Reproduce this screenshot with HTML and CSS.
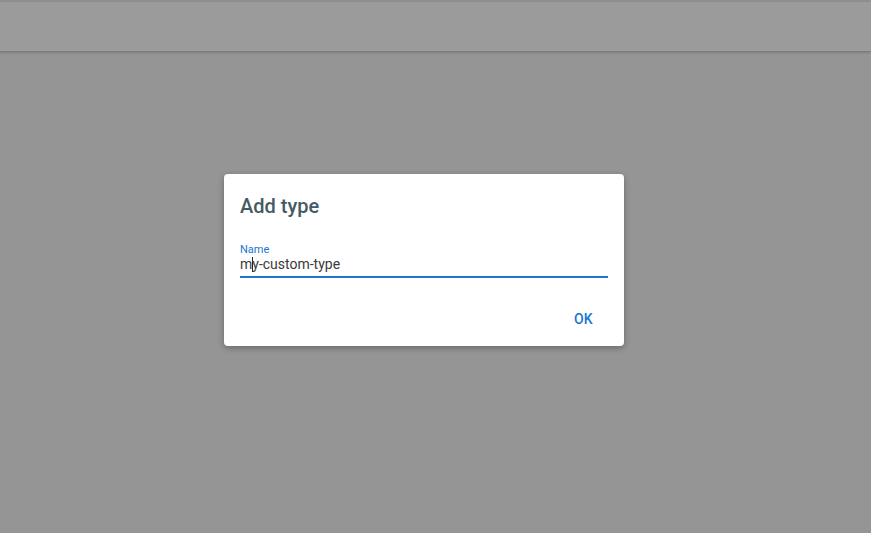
FILE: index.html
```html
<!DOCTYPE html>
<html>
<head>
<meta charset="utf-8">
<link rel="stylesheet" href="styles.css">
</head>
<body>
<div class="page">
  <header class="topbar"></header>
  <main class="backdrop">
    <div class="dialog">
      <h2 class="dialog-title">Add type</h2>
      <div class="field">
        <label class="field-label">Name</label>
        <div class="field-input">m<span class="caret"></span>y-custom-type</div>
      </div>
      <div class="actions">
        <button class="btn">OK</button>
      </div>
    </div>
  </main>
</div>
</body>
</html>
```
FILE: styles.css
```css
* { box-sizing: border-box; }
html, body { margin: 0; height: 100%; }
body {
  font-family: Roboto, "Noto Sans", sans-serif;
  background: #959595;
}
.page {
  height: 533px;
  display: flex;
  flex-direction: column;
}
.topbar {
  height: 52px;
  background: #9b9b9b;
  border-top: 2px solid #8e8e8e;
  border-bottom: 1px solid #7d7d7d;
  box-shadow: 0 1px 2px rgba(0,0,0,0.15);
  flex: none;
}
.backdrop {
  flex: 1;
  display: flex;
  justify-content: center;
  align-items: flex-start;
  padding-top: 122px;
  padding-right: 23px;
}
.dialog {
  width: 400px;
  height: 172px;
  background: #fff;
  border-radius: 4px;
  box-shadow: 0 2px 6px rgba(0,0,0,0.3);
  padding: 20px 16px 0 16px;
}
.dialog-title {
  margin: 0;
  font-size: 20px;
  font-weight: 500;
  color: #455a64;
  line-height: 24px;
}
.field {
  margin-top: 26px;
  width: 368px;
  border-bottom: 2px solid #1976d2;
  padding-bottom: 3px;
}
.field-label {
  display: block;
  font-size: 11px;
  color: #1976d2;
  line-height: 12px;
}
.field-input {
  font-size: 14px;
  color: #3a3a3a;
  line-height: 17px;
}
.caret {
  display: inline-block;
  width: 1px;
  height: 15px;
  background: #222;
  vertical-align: -3px;
  margin-right: -1px;
}
.actions {
  display: flex;
  justify-content: flex-end;
  margin-top: 33px;
}
.btn {
  font-family: Roboto, "Noto Sans", sans-serif;
  font-size: 14px;
  font-weight: 500;
  color: #1976d2;
  background: none;
  border: none;
  padding: 0 15px 0 0;
  letter-spacing: 0.3px;
  cursor: pointer;
}
```
